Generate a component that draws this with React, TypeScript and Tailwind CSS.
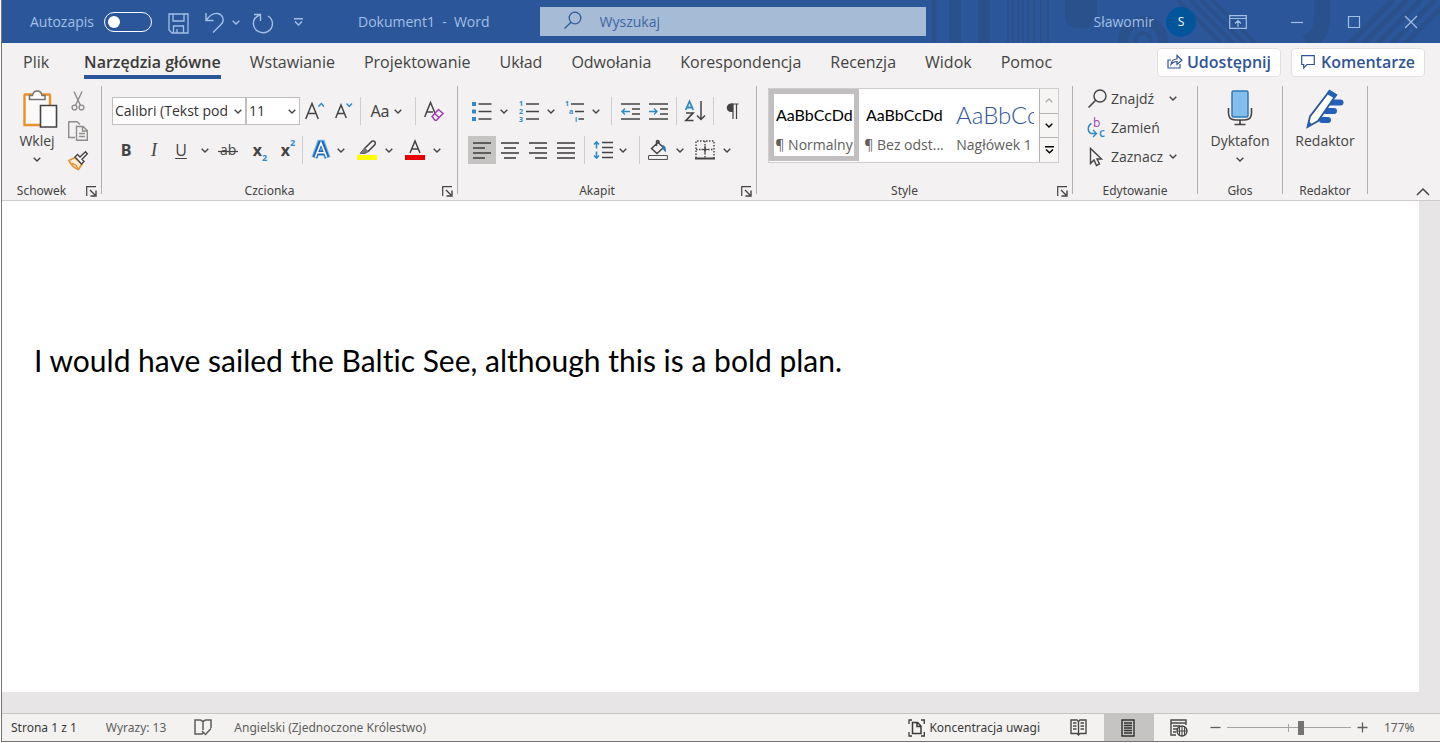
import React, { useState } from "react";
import clsx from "clsx";

const tabs = [
  "Plik",
  "Narzędzia główne",
  "Wstawianie",
  "Projektowanie",
  "Układ",
  "Odwołania",
  "Korespondencja",
  "Recenzja",
  "Widok",
  "Pomoc",
];

type IconProps = {
  w: number;
  h: number;
  children: React.ReactNode;
  className?: string;
};

function Icon({ w, h, children, className }: IconProps) {
  return (
    <svg
      width={w}
      height={h}
      viewBox={`0 0 ${w} ${h}`}
      fill="none"
      stroke="currentColor"
      strokeWidth="1.4"
      aria-hidden="true"
      className={clsx("shrink-0 overflow-visible", className)}
    >
      {children}
    </svg>
  );
}

function Chevron({ className }: { className?: string }) {
  return (
    <Icon w={8} h={5} className={className}>
      <path d="M0.7 0.7 4 4 7.3 0.7" />
    </Icon>
  );
}

function Tool({
  label,
  className,
  children,
}: {
  label: string;
  className?: string;
  children: React.ReactNode;
}) {
  return (
    <button
      type="button"
      aria-label={label}
      className={clsx("flex h-7 shrink-0 items-center justify-center", className)}
    >
      {children}
    </button>
  );
}

function Rule() {
  return <div className="h-7 w-px shrink-0 bg-[#cfcdcc]" />;
}

function Separator() {
  return <div className="h-[108px] w-px shrink-0 bg-[#b3b0ae]" />;
}

function Group({
  name,
  launcher,
  className,
  children,
}: {
  name: string;
  launcher?: boolean;
  className: string;
  children: React.ReactNode;
}) {
  return (
    <section aria-label={name} className={clsx("flex h-[113px] shrink-0 flex-col", className)}>
      <div className="flex-1">{children}</div>
      <div className="flex h-4 items-center">
        <span className="flex-1 text-center font-['Noto_Sans',sans-serif] text-xs leading-4">{name}</span>
        {launcher && (
          <button type="button" aria-label={`${name}: więcej opcji`} className="mr-1 flex w-4 justify-end">
            <Icon w={11} h={11}>
              <path d="M0.7 10V0.7H10" strokeWidth="1.2" />
              <path d="M4 4 9 9M10 4.5V10H4.5" strokeWidth="1.4" />
            </Icon>
          </button>
        )}
      </div>
    </section>
  );
}

function Combo({ label, value, className }: { label: string; value: string; className: string }) {
  return (
    <div className={clsx("relative h-7 shrink-0", className)}>
      <select
        aria-label={label}
        className="h-7 w-full appearance-none overflow-hidden border border-[#c1bfbe] bg-white pr-[18px] pl-0.5 text-sm whitespace-nowrap text-[#333]"
      >
        <option>{value}</option>
      </select>
      <Chevron className="pointer-events-none absolute top-3 right-1" />
    </div>
  );
}

function Backdrop() {
  return (
    <svg
      className="pointer-events-none absolute top-0 right-0"
      width="580"
      height="43"
      viewBox="0 0 580 43"
      fill="none"
      aria-hidden="true"
    >
      <g stroke="#2a4d84" strokeOpacity="0.6">
        <path d="M74 0V43" strokeWidth="5" />
        <path d="M95 0V43M124 0V43" strokeWidth="12" />
        <path d="M148 0V43M153 0V43M158 0V43M163 0V43M168 0V43M174 0V43M181 0V43M188 0V43" strokeWidth="2" />
        <path d="M205 0H237V16C237 24 231 28 225 28H217C210 28 205 24 205 16Z" fill="#2a4d84" fillOpacity="0.6" stroke="none" />
        <circle cx="283" cy="41" r="20" strokeWidth="10" />
        <circle cx="283" cy="41" r="8" strokeWidth="4" />
        <path d="M330 0 373 43M341 0 384 43M352 0 395 43M318 0 361 43" strokeWidth="4" />
        <path d="M462 0V20C462 32 456 38 446 43" strokeWidth="16" />
        <path d="M490 43 533 0M504 43 547 0M518 43 561 0M532 43 575 0M546 43 589 0" strokeWidth="5" />
      </g>
    </svg>
  );
}

function TitleBar() {
  return (
    <header className="relative flex h-[43px] items-center bg-[#2b579a] text-[#a3bfe6]">
      <Backdrop />
      <div className="relative flex flex-1 items-center">
        <label htmlFor="autosave" className="ml-7 text-sm">
          Autozapis
        </label>
        <span className="relative ml-2.5 h-5 w-12 shrink-0">
          <input
            id="autosave"
            type="checkbox"
            role="switch"
            className="block h-5 w-12 appearance-none rounded-full border border-white"
          />
          <span className="pointer-events-none absolute top-1 left-1 size-3 rounded-full bg-white" />
        </span>
        <button type="button" aria-label="Zapisz" className="ml-4 pt-1">
          <Icon w={21} h={21}>
            <path d="M1 1H20V20H4L1 17ZM5 1V8H16V1M5.5 20V13H15.5V20M9 20V16" strokeWidth="1.3" />
          </Icon>
        </button>
        <button type="button" aria-label="Cofnij" className="ml-4 flex items-center gap-2 pt-0.5">
          <Icon w={19} h={21}>
            <path d="M1 1V8.500H8.500M1.500 8C5 3 9 1 12.500 1.500C18 2.500 20 8.500 16 12.500L8 20.500" />
          </Icon>
          <Chevron />
        </button>
        <button type="button" aria-label="Powtórz" className="ml-3 pt-1">
          <Icon w={22} h={21}>
            <path d="M2 1.500H8.500V8M8 2C3.500 3.500 1 7 1.500 11.500A9.500 9 0 1 0 16 3" />
          </Icon>
        </button>
        <button type="button" aria-label="Dostosuj pasek" className="ml-5">
          <Icon w={9} h={8}>
            <path d="M0 0.700H9M1 3.500 4.500 7 8 3.500" />
          </Icon>
        </button>
        <h1 className="ml-[55px] text-sm whitespace-pre">Dokument1  -  Word</h1>
        <div className="relative ml-[50px] h-[29px] w-[386px] shrink-0 bg-[#a6bbd5] text-[#2f5a9c]">
          <Icon w={18} h={18} className="pointer-events-none absolute top-1 left-6">
            <circle cx="11" cy="7" r="5.800" strokeWidth="1.300" />
            <path d="M7 11.200 0.500 17.500" strokeWidth="1.300" />
          </Icon>
          <input
            type="search"
            aria-label="Wyszukaj"
            placeholder="Wyszukaj"
            className="h-full w-full bg-transparent pl-15 text-sm placeholder:text-[#3d66a5]"
          />
        </div>
        <div className="ml-auto flex items-center">
          <span className="text-sm">Sławomir</span>
          <span className="ml-3 flex size-[30px] items-center justify-center rounded-full bg-[#02559b] text-xs text-white">
            S
          </span>
          <button type="button" aria-label="Opcje wstążki" className="ml-[33px]">
            <Icon w={18} h={14}>
              <path d="M0.700 0.700H17.300V13.300H0.700ZM0.700 3.500H17.300M9 12V6M6 8.500 9 5.500 12 8.500" strokeWidth="1.200" />
            </Icon>
          </button>
          <button type="button" aria-label="Minimalizuj" className="ml-9 flex w-7 justify-center">
            <Icon w={14} h={14}>
              <path d="M1 7.500H13" strokeWidth="1.200" />
            </Icon>
          </button>
          <button type="button" aria-label="Maksymalizuj" className="ml-[29px] flex w-7 justify-center">
            <Icon w={14} h={14}>
              <path d="M1.500 1.500H12.500V12.500H1.500Z" strokeWidth="1.200" />
            </Icon>
          </button>
          <button type="button" aria-label="Zamknij" className="mr-[15px] ml-[29px] flex w-7 justify-center">
            <Icon w={14} h={14}>
              <path d="M1 1 13 13M13 1 1 13" strokeWidth="1.200" />
            </Icon>
          </button>
        </div>
      </div>
    </header>
  );
}

function TabBar() {
  const [active, setActive] = useState("Narzędzia główne");
  return (
    <nav aria-label="Karty wstążki" className="flex h-[43px] items-start pr-[15px] pl-[21px]">
      <div className="flex gap-[29px]">
        {tabs.map((tab) => (
          <button
            key={tab}
            type="button"
            onClick={() => setActive(tab)}
            className={clsx(
              "h-9 border-b-4 pt-1.5 text-base leading-6 whitespace-nowrap",
              tab === "Plik" && "mr-1.5",
              tab === active ? "border-[#2b579a] font-semibold text-[#3b3a39]" : "border-transparent",
            )}
          >
            {tab}
          </button>
        ))}
      </div>
      <div className="mt-[5px] ml-auto flex gap-2.5 font-semibold text-[#2f5597]">
        <button
          type="button"
          className="flex h-[29px] items-center gap-1 rounded-sm border border-[#e3e1e0] bg-white px-[9px] pb-0.5 text-base leading-6 whitespace-nowrap"
        >
          <Icon w={16} h={15}>
            <path d="M4 6H1V14H13V10" strokeWidth="1.200" />
            <path d="M4 10.500C4.500 6.500 7 5 10 5V1.500L15 6.200 10 10.500V7.500C7.500 7.500 5.500 8.500 4 10.500Z" strokeWidth="1.200" />
          </Icon>
          Udostępnij
        </button>
        <button
          type="button"
          className="flex h-[29px] items-center gap-1.5 rounded-sm border border-[#e3e1e0] bg-white px-[9px] pb-0.5 text-base leading-6 whitespace-nowrap"
        >
          <Icon w={14} h={14}>
            <path d="M0.700 0.700H13.300V9.500H6L2.700 13V9.500H0.700Z" strokeWidth="1.200" />
          </Icon>
          Komentarze
        </button>
      </div>
    </nav>
  );
}

function Clipboard() {
  return (
    <Group name="Schowek" launcher className="w-[99px]">
      <div className="flex">
        <button type="button" className="ml-[11px] flex w-12 flex-col items-center pt-1 text-sm leading-5">
          <Icon w={36} h={38} className="ml-1.5">
            <path d="M3 5.500H27.500V34H3Z" fill="#fbfaf9" stroke="none" />
            <path d="M2.500 4.500V35H18M28 4.500V15M2 4.500H28.500" stroke="#e8912d" strokeWidth="2.400" />
            <path d="M7.500 9.500V5.500H10.500C11 2.500 13 1 15.200 1S19.500 2.500 20 5.500H23V9.500Z" fill="#fff" stroke="#767472" strokeWidth="1.500" />
            <path d="M18.500 15.500H34.500V37H18.500Z" fill="#fff" stroke="#444" strokeWidth="1.600" />
          </Icon>
          <span className="mt-[3px]">Wklej</span>
          <Chevron className="mt-1.5" />
        </button>
        <div className="ml-1.5 flex flex-col gap-2 pt-1">
          <button type="button" aria-label="Wytnij" className="flex h-[22px] w-[22px] items-center justify-center">
            <Icon w={14} h={20} className="text-[#8f8d8b]">
              <path d="M3 0.500 9.500 14.500M11 0.500 4.500 14.500" />
              <circle cx="3.500" cy="16.500" r="2.400" />
              <circle cx="10.500" cy="16.500" r="2.400" />
            </Icon>
          </button>
          <button type="button" aria-label="Kopiuj" className="flex h-[22px] w-[22px] items-center justify-center">
            <Icon w={20} h={20} className="text-[#8f8d8b]">
              <path d="M7 16.500H0.700V0.700H9L12 3.500" />
              <path d="M8.500 5.500H15L19.300 9.500V19.300H8.500ZM14.500 5.500V10H19.300M11 12.500H17M11 15.500H17" fill="#f3f1f0" />
            </Icon>
          </button>
          <button type="button" aria-label="Malarz formatów" className="flex h-[22px] w-[22px] items-center justify-center">
            <Icon w={20} h={20}>
              <path d="M1 9.500 7 6.500 14 13 10.500 18.500C6 17 3 14 1 9.500Z" fill="#fdf0dc" stroke="#e8912d" strokeWidth="1.800" />
              <path d="M4 12.500 8 14 10 18" stroke="#e8912d" strokeWidth="1.500" />
              <path d="M7 6 9.500 3.500 12 6 17.500 0.800 19.300 2.800 14 8.200 16 10.500 13.500 13Z" fill="#fff" stroke="#444" strokeWidth="1.400" />
            </Icon>
          </button>
        </div>
      </div>
    </Group>
  );
}

function FontGroup() {
  return (
    <Group name="Czcionka" launcher className="w-[355px]">
      <div className="flex items-center pt-[11px] pl-2.5">
        <Combo label="Czcionka" value="Calibri (Tekst podstawowy)" className="w-[134px]" />
        <Combo label="Rozmiar czcionki" value="11" className="w-[54px]" />
        <Tool label="Zwiększ rozmiar czcionki" className="w-[30px]">
          <Icon w={20} h={18}>
            <path d="M0.700 17 7 1.500 13.300 17M3 11.500H11" strokeWidth="1.500" />
            <path d="M13.500 4.500 16.300 1.500 19 4.500" stroke="#2e8bc8" />
          </Icon>
        </Tool>
        <Tool label="Zmniejsz rozmiar czcionki" className="w-[30px] pr-0.5">
          <Icon w={18} h={18}>
            <path d="M0.700 16 6 3 11.300 16M2.700 11.500H9.300" strokeWidth="1.500" />
            <path d="M11.500 1.500 14.300 4.500 17 1.500" stroke="#2e8bc8" />
          </Icon>
        </Tool>
        <Rule />
        <Tool label="Zmień wielkość liter" className="w-[54px] gap-1 pr-1">
          <span className="font-['Noto_Sans',sans-serif] text-base">Aa</span>
          <Chevron />
        </Tool>
        <Rule />
        <Tool label="Wyczyść formatowanie" className="w-9">
          <Icon w={20} h={20}>
            <path d="M0.700 16 6.500 1.500 11 12M2.700 11H9" strokeWidth="1.500" />
            <path d="M8 15.500 14.500 8.500 19 12.500 12.500 19.300H11ZM10.500 12.500 15 16.500" stroke="#a03fb3" strokeWidth="1.500" />
          </Icon>
        </Tool>
      </div>
      <div className="flex items-center pt-[11px] pl-2.5">
        <Tool label="Pogrubienie" className="w-7">
          <span className="text-base font-bold">B</span>
        </Tool>
        <Tool label="Kursywa" className="w-7">
          <span className="font-['Liberation_Serif',serif] text-lg italic">I</span>
        </Tool>
        <Tool label="Podkreślenie" className="w-12 gap-3.5">
          <span className="text-base leading-5 underline underline-offset-2">U</span>
          <Chevron />
        </Tool>
        <Tool label="Przekreślenie" className="w-6">
          <Icon w={20} h={14}>
            <text x="2" y="12" className="text-sm" fill="currentColor" stroke="none">ab</text>
            <path d="M0 8.500H20" strokeWidth="1.200" />
          </Icon>
        </Tool>
        <Tool label="Indeks dolny" className="ml-1 w-8">
          <span className="text-base leading-5 font-bold">x</span>
          <span className="self-end text-[9px] font-bold text-[#2e8bc8]">2</span>
        </Tool>
        <Tool label="Indeks górny" className="w-6">
          <span className="text-base leading-5 font-bold">x</span>
          <span className="self-start text-[9px] font-bold text-[#2e8bc8]">2</span>
        </Tool>
        <div className="pl-0.5">
          <Rule />
        </div>
        <Tool label="Efekty tekstowe" className="ml-2 gap-1.5">
          <Icon w={20} h={20}>
            <path d="M3.500 18 8.800 3H11.200L16.500 18M6 12.800H14" stroke="#7cbcf0" strokeWidth="6.500" />
            <path d="M3.800 17.500 9.200 3H10.800L16.200 17.500M6 12.800H14" stroke="#1e66b4" strokeWidth="4.600" />
            <path d="M4.200 17.500 10 3 15.800 17.500M6 12.800H14" stroke="#fff" strokeWidth="1.600" />
          </Icon>
          <Chevron />
        </Tool>
        <Tool label="Kolor wyróżnienia" className="ml-3 gap-2">
          <Icon w={20} h={20}>
            <path d="M0 15H20V20H0Z" fill="#ffff00" stroke="none" />
            <path d="M8 8 15 1.200C17 0.200 19.200 2.200 18 4.500L11 11.500 6.500 12Z" strokeWidth="1.500" />
            <path d="M7.500 8 3 13.500H8L11 11.500Z" fill="#777" stroke="#666" strokeWidth="1" />
          </Icon>
          <Chevron />
        </Tool>
        <Tool label="Kolor czcionki" className="ml-3 gap-2">
          <Icon w={20} h={20}>
            <path d="M0 15H20V20H0Z" fill="#e80000" stroke="none" />
            <path d="M5 13 10 1 15 13M6.500 9H13.500" strokeWidth="1.500" />
          </Icon>
          <Chevron />
        </Tool>
      </div>
    </Group>
  );
}

type Span = [number, number];

function Lines({ rows }: { rows: Span[] }) {
  return (
    <Icon w={18} h={17}>
      {rows.map(([from, to], i) => (
        <path key={i} d={`M${from} ${1 + i * 5}H${to}`} strokeWidth="1.600" />
      ))}
    </Icon>
  );
}

const alignments: { label: string; rows: Span[] }[] = [
  { label: "Wyrównaj do lewej", rows: [[0, 18], [0, 12], [0, 18], [0, 12]] },
  { label: "Wyśrodkuj", rows: [[0, 18], [3, 15], [0, 18], [3, 15]] },
  { label: "Wyrównaj do prawej", rows: [[0, 18], [6, 18], [0, 18], [6, 18]] },
  { label: "Wyjustuj", rows: [[0, 18], [0, 18], [0, 18], [0, 18]] },
];

const markClass = "fill-[#2e8bc8] text-[7px] font-bold";

function ParagraphGroup() {
  return (
    <Group name="Akapit" launcher className="w-[298px]">
      <div className="flex items-center pt-[11px] pl-3.5">
        <Tool label="Punktory" className="gap-2">
          <Icon w={20} h={20}>
            <path d="M0 1H4V5H0ZM0 8.500H4V12.500H0ZM0 16H4V20H0Z" fill="#2e8bc8" stroke="none" />
            <path d="M6.500 3H19.500M6.500 10.500H19.500M6.500 18H19.500" strokeWidth="1.500" />
          </Icon>
          <Chevron />
        </Tool>
        <Tool label="Numerowanie" className="ml-[11px] gap-2">
          <Icon w={20} h={20}>
            <g className={markClass} stroke="none">
              <text x="0" y="5">1</text>
              <text x="0" y="13">2</text>
              <text x="0" y="21">3</text>
            </g>
            <path d="M7 3H20M7 10.500H20M7 18H20" strokeWidth="1.500" />
          </Icon>
          <Chevron />
        </Tool>
        <Tool label="Lista wielopoziomowa" className="ml-[9px] gap-2">
          <Icon w={20} h={20}>
            <g className={markClass} stroke="none">
              <text x="1" y="5">1</text>
              <text x="5" y="13">a</text>
              <text x="11" y="21">i</text>
            </g>
            <path d="M7 3H20M11 10.500H20M14.500 18H20" strokeWidth="1.500" />
          </Icon>
          <Chevron />
        </Tool>
        <div className="pl-[11px]">
          <Rule />
        </div>
        <Tool label="Zmniejsz wcięcie" className="ml-2 w-5">
          <Icon w={19} h={17}>
            <path d="M0 1H19M11 6H19M11 11H19M0 16H19" strokeWidth="1.500" />
            <path d="M9 8.500H1M4 5.500 1 8.500 4 11.500" stroke="#2e8bc8" />
          </Icon>
        </Tool>
        <Tool label="Zwiększ wcięcie" className="ml-2 w-5">
          <Icon w={19} h={17}>
            <path d="M0 1H19M11 6H19M11 11H19M0 16H19" strokeWidth="1.500" />
            <path d="M0 8.500H8M5 5.500 8 8.500 5 11.500" stroke="#2e8bc8" />
          </Icon>
        </Tool>
        <div className="pl-2">
          <Rule />
        </div>
        <Tool label="Sortuj" className="ml-2 w-5">
          <Icon w={20} h={22}>
            <path d="M0.700 10 4.500 1.500 8.300 10M2 7.500H7" stroke="#2e8bc8" strokeWidth="1.800" />
            <path d="M1 13H8L1 20.500H8.500" strokeWidth="1.700" />
            <path d="M16 1V19.500M12 15.500 16 19.500 20 15.500" strokeWidth="1.500" />
          </Icon>
        </Tool>
        <div className="pl-2">
          <Rule />
        </div>
        <Tool label="Pokaż wszystko" className="ml-2.5 w-4">
          <Icon w={13} h={17}>
            <path d="M7 1V16M10.500 1V16M5 1H12.500" strokeWidth="1.200" />
            <path d="M7 0.500H5A4.200 4.200 0 0 0 5 9H7Z" fill="currentColor" stroke="none" />
          </Icon>
        </Tool>
      </div>
      <div className="flex items-center pt-[11px] pl-2.5">
        {alignments.map(({ label, rows }, i) => (
          <Tool key={label} label={label} className={clsx("w-7", i === 0 && "bg-[#c6c4c3]")}>
            <Lines rows={rows} />
          </Tool>
        ))}
        <div className="pl-1">
          <Rule />
        </div>
        <Tool label="Interlinia" className="ml-2 gap-1.5">
          <Icon w={20} h={18}>
            <path d="M9 1.500H20M9 6.500H20M9 11.500H20M9 16.500H20" strokeWidth="1.500" />
            <path d="M3.500 1V7.500M1 3.500 3.500 1 6 3.500M3.500 10.500V17M1 14.500 3.500 17 6 14.500" stroke="#2e8bc8" strokeWidth="1.600" />
          </Icon>
          <Chevron />
        </Tool>
        <div className="pl-3">
          <Rule />
        </div>
        <Tool label="Cieniowanie" className="ml-2 gap-2">
          <Icon w={20} h={20}>
            <path d="M0.600 15.600H19.400V19.400H0.600Z" fill="#fff" strokeWidth="1" />
            <path d="M10 2.500 15.500 7.500 9 13.500 3.500 8.500ZM8.500 6V1.500C8.500 0.200 11 0.200 11 1.500V4" strokeWidth="1.500" />
            <path d="M14 5C17 5 18.500 8 17.500 12.500L14.500 8.500Z" fill="#2872b8" stroke="none" />
          </Icon>
          <Chevron />
        </Tool>
        <Tool label="Obramowania" className="ml-[11px] gap-2">
          <Icon w={20} h={20}>
            <path d="M1 18V1H19V18" strokeDasharray="1.500 1.500" />
            <path d="M10 1V18M1 9.500H19" strokeDasharray="1.500 1.500" />
            <path d="M10 6V13M6.500 9.500H13.500" strokeWidth="1.200" />
            <path d="M0 18.500H20" strokeWidth="2" />
          </Icon>
          <Chevron />
        </Tool>
      </div>
    </Group>
  );
}

const styleItems = [
  { name: "¶ Normalny", sample: "text-base text-black", selected: true },
  { name: "¶ Bez odst...", sample: "text-base text-black", selected: false },
  { name: "Nagłówek 1", sample: "text-2xl font-light text-[#2f5597]", selected: false },
];

function StyleGroup() {
  return (
    <Group name="Style" launcher className="w-[315px]">
      <div className="mt-0.5 ml-[11px] flex h-[75px] w-[291px] border border-[#d0cecd] bg-white">
        {styleItems.map((item) => (
          <button
            key={item.name}
            type="button"
            className={clsx(
              "flex h-[72px] w-[90px] shrink-0 flex-col border-[5px] pt-[7px]",
              item.selected ? "border-[#c1bfbf]" : "border-transparent",
            )}
          >
            <span className="flex h-7 w-full shrink-0 items-center overflow-hidden pl-0.5">
              <span
                className={clsx("font-['Lato','Noto_Sans',sans-serif] whitespace-nowrap", item.sample)}
              >
                AaBbCcDd
              </span>
            </span>
            <span className="w-full shrink-0 text-center text-sm leading-8 whitespace-nowrap text-[#605e5c]">
              {item.name}
            </span>
          </button>
        ))}
        <div className="flex flex-1 flex-col divide-y divide-[#b5b3b2] border-l border-[#b5b3b2] bg-[#f6f5f4]">
          <button type="button" aria-label="W górę" className="flex flex-1 items-center justify-center text-[#b0aeac]">
            <Chevron className="rotate-180" />
          </button>
          <button type="button" aria-label="W dół" className="flex flex-1 items-center justify-center text-black">
            <Chevron />
          </button>
          <button type="button" aria-label="Więcej stylów" className="flex flex-1 items-center justify-center text-black">
            <Icon w={9} h={8}>
              <path d="M0 0.800H9M1 3.500 4.500 6.800 8 3.500" />
            </Icon>
          </button>
        </div>
      </div>
    </Group>
  );
}

function EditGroup() {
  return (
    <Group name="Edytowanie" className="w-[124px]">
      <div className="flex flex-col pl-3.5 text-sm">
        <button type="button" className="flex h-[25px] items-center gap-1">
          <Icon w={20} h={20}>
            <circle cx="13" cy="7" r="6" />
            <path d="M8.700 11.300 1.500 18.500" strokeWidth="1.600" />
          </Icon>
          <span>Znajdź</span>
          <Chevron className="ml-[11px]" />
        </button>
        <button type="button" className="mt-1 flex h-[25px] items-center gap-1">
          <Icon w={20} h={20}>
            <g stroke="none" className="text-xs">
              <text x="6" y="9" fill="#a03fb3">b</text>
              <text x="12" y="19" fill="#2e8bc8" className="font-semibold">c</text>
            </g>
            <path d="M4.500 5.500C0.500 7.500 0 13.500 4 15.500H9M6 12 9.500 15.500 6 19" stroke="#2e8bc8" />
          </Icon>
          <span>Zamień</span>
        </button>
        <button type="button" className="mt-1 flex h-[25px] items-center gap-1">
          <Icon w={20} h={20}>
            <path d="M3.500 1.500V16.500L7 13 9.500 18.500 12.500 17 10 12H14.500Z" />
          </Icon>
          <span>Zaznacz</span>
          <Chevron className="ml-0.5" />
        </button>
      </div>
    </Group>
  );
}

function Ribbon() {
  return (
    <div className="flex h-[114px]">
      <Clipboard />
      <Separator />
      <FontGroup />
      <Separator />
      <ParagraphGroup />
      <Separator />
      <StyleGroup />
      <Separator />
      <EditGroup />
      <Separator />
      <Group name="Głos" className="w-[84px]">
        <button type="button" className="flex w-full flex-col items-center pt-1 text-sm leading-5">
          <Icon w={26} h={38}>
            <path d="M1.500 18V23Q1.500 30 8.500 30H17.500Q24.500 30 24.500 23V18M13 30V34M7.500 34.500H18.500" strokeWidth="1.600" />
            <rect x="5" y="1" width="16" height="26" rx="1.500" fill="#83beec" stroke="#2b7ab8" strokeWidth="1.500" />
          </Icon>
          <span className="mt-[3px]">Dyktafon</span>
          <Chevron className="mt-1.5" />
        </button>
      </Group>
      <Separator />
      <Group name="Redaktor" className="w-[84px]">
        <button type="button" className="flex w-full flex-col items-center pt-1 text-sm leading-5">
          <Icon w={38} h={38}>
            <path d="M24 12.500H34.500M20 21H28M16 30H22" stroke="#2460b8" strokeWidth="6" strokeLinecap="round" />
            <path d="M23.500 1 30 5 12 31 1.500 37 4 26.500Z" fill="#fff" stroke="#2b579a" strokeWidth="1.800" />
            <path d="M23.500 0.500 30.500 5 28.500 7.500 21.500 3.500Z" fill="#2460b8" stroke="#2460b8" />
            <path d="M3 31.500 6.500 34.500 1 38Z" fill="#2460b8" stroke="none" />
          </Icon>
          <span className="mt-[3px]">Redaktor</span>
        </button>
      </Group>
      <Separator />
      <button type="button" aria-label="Zwiń wstążkę" className="mr-2.5 mb-1 ml-auto self-end">
        <Icon w={14} h={8}>
          <path d="M1 7 7 1 13 7" strokeWidth="1.500" />
        </Icon>
      </button>
    </div>
  );
}

function StatusBar() {
  return (
    <footer className="flex h-7 shrink-0 items-center border-t border-[#c8c6c5] bg-[#f3f2f1] pl-[9px] font-['Noto_Sans',sans-serif] text-xs text-[#605e5c]">
      <span className="text-[#3b3a39]">Strona 1 z 1</span>
      <span className="ml-[29px]">Wyrazy: 13</span>
      <button type="button" aria-label="Sprawdzanie pisowni" className="ml-7">
        <Icon w={18} h={17}>
          <path d="M9 14 8 15H1V1H6.500L9 2.500V11M9 2.500 11.500 1H17V9M8 12 11.500 15.500 17 9.500" strokeWidth="1.500" />
        </Icon>
      </button>
      <span className="ml-[22px]">Angielski (Zjednoczone Królestwo)</span>
      <div className="ml-auto flex h-full items-center">
        <button type="button" className="flex items-center gap-1 text-[#3b3a39]">
          <Icon w={17} h={18}>
            <path d="M4 1H1V5M13 1H16.300V5M1 13V17H4M16.300 13V17H13" strokeWidth="1.300" />
            <path d="M4.500 3.500H9.500L13 7V14.500H4.500ZM9 3.500V7.500H13" strokeWidth="1.500" />
          </Icon>
          Koncentracja uwagi
        </button>
        <button type="button" aria-label="Tryb odczytu" className="ml-3 flex h-full w-[52px] items-center justify-center text-[#4a4846]">
          <Icon w={17} h={17}>
            <path d="M8.500 2.500 7 1H1V14.500H7L8.500 16 10 14.500H16V1H10ZM8.500 2.500V16" />
            <path d="M3 4H6.500M3 7H6.500M3 10H6.500M10.500 4H14M10.500 7H14M10.500 10H14" />
          </Icon>
        </button>
        <button type="button" aria-label="Układ wydruku" className="flex h-full w-[50px] items-center justify-center bg-[#c6c4c3] pr-0.5 text-[#333]">
          <Icon w={14} h={18}>
            <path d="M1 1H13V17H1Z" />
            <path d="M3 4H11M3 6.500H11M3 9H11M3 11.500H11M3 14H11" />
          </Icon>
        </button>
        <button type="button" aria-label="Układ sieci Web" className="flex h-full w-[50px] items-center justify-center text-[#4a4846]">
          <Icon w={18} h={18}>
            <path d="M6 16H1V1H16V6M1 4H16M3 7H10M3 10H7M3 13H6" />
            <circle cx="12" cy="12" r="5" />
            <path d="M12 7V17M7 12H17M9.500 8V16M14.500 8V16" strokeWidth="1.100" />
          </Icon>
        </button>
        <button type="button" aria-label="Pomniejsz" className="ml-1.5">
          <Icon w={11} h={11}>
            <path d="M0.500 5.500H10.500" strokeWidth="1.300" />
          </Icon>
        </button>
        <div className="relative ml-1.5 flex h-full w-[124px] items-center">
          <span className="absolute top-2.5 left-[61px] h-2 w-px bg-[#a6a4a2]" />
          <input
            type="range"
            aria-label="Powiększenie"
            min={0}
            max={100}
            defaultValue={60}
            className="relative h-px w-full appearance-none bg-[#a6a4a2] [&::-webkit-slider-thumb]:h-3.5 [&::-webkit-slider-thumb]:w-1.5 [&::-webkit-slider-thumb]:appearance-none [&::-webkit-slider-thumb]:bg-[#767472]"
          />
        </div>
        <button type="button" aria-label="Powiększ" className="ml-1.5">
          <Icon w={11} h={11}>
            <path d="M0.500 5.500H10.500M5.500 0.500V10.500" strokeWidth="1.300" />
          </Icon>
        </button>
        <span className="ml-4 w-14">177%</span>
      </div>
    </footer>
  );
}

export default function App() {
  return (
    <div className="flex min-h-screen flex-col bg-white pb-px pl-px font-['Open_Sans','Noto_Sans',sans-serif] text-[#444]">
      <div className="flex flex-1 flex-col border-b border-l border-[#767476]">
        <TitleBar />
        <div className="border-b border-[#cfcdcc] bg-[#f3f1f1]">
          <TabBar />
          <Ribbon />
        </div>
        <main className="flex flex-1 flex-col bg-[#e7e5e6] pr-[21px] pb-[21px]">
          <article className="flex-1 bg-white px-8 pt-[139px]">
            <p className="font-['Lato','Noto_Sans',sans-serif] text-[30px] leading-10 text-black [font-variant-ligatures:none]">
              I would have sailed the Baltic See, although this is a bold plan.
            </p>
          </article>
        </main>
        <StatusBar />
      </div>
    </div>
  );
}
